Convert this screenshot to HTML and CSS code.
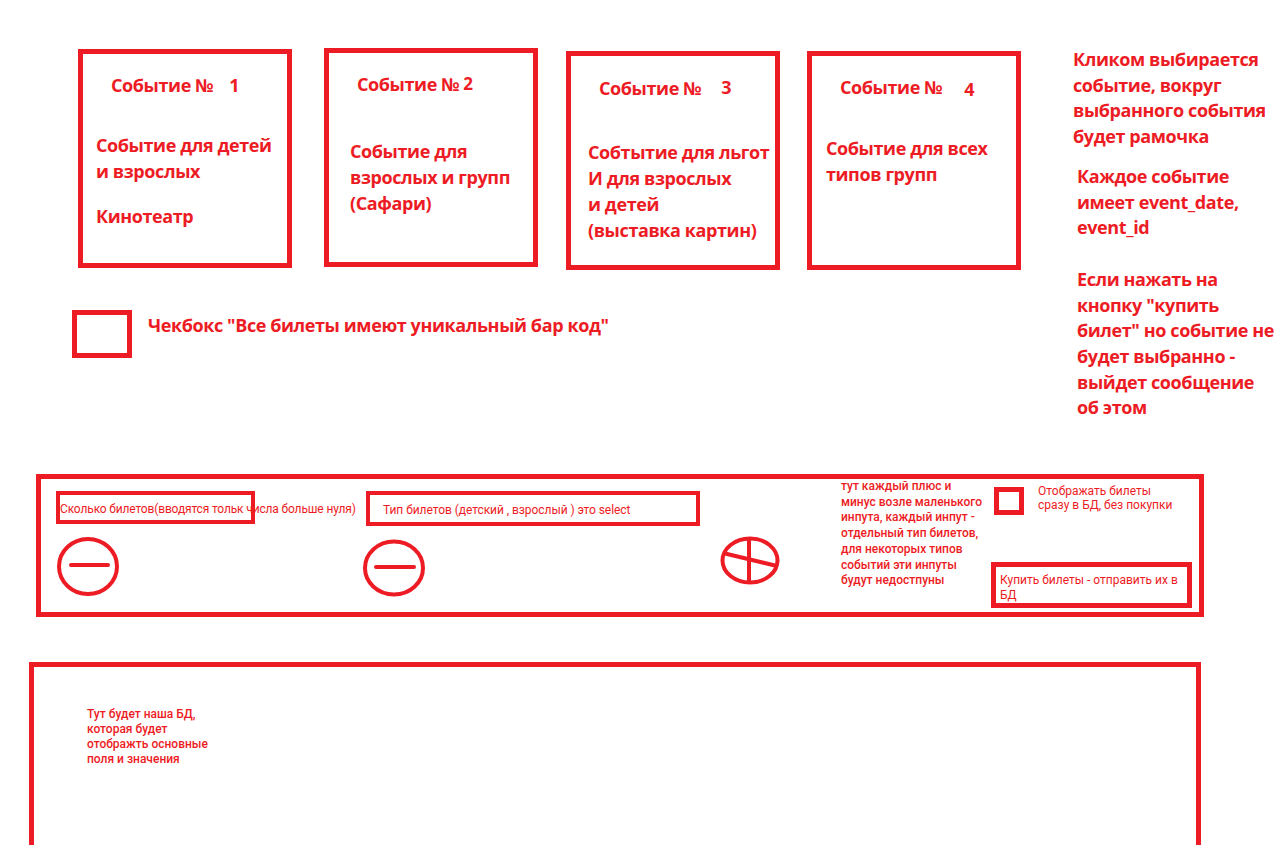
FILE: index.html
```html
<!DOCTYPE html>
<html lang="ru">
<head>
    <meta charset="UTF-8">
    <meta name="viewport" content="width=device-width, initial-scale=1.0">
    <title>Покупка билетов</title>
    <link rel="stylesheet" href="styles.css">
</head>
<body>
    <div class="top">
        <div class="left">
            <div class="events">
                <div class="event">
                    <div class="event-title">Событие №<span class="num">1</span></div>
                    <div class="event-text">Событие для детей<br>и взрослых</div>
                    <div class="event-text place">Кинотеатр</div>
                </div>
                <div class="event event-2">
                    <div class="event-title">Событие №<span class="num">2</span></div>
                    <div class="event-text">Событие для<br>взрослых и групп<br>(Сафари)</div>
                </div>
                <div class="event event-3">
                    <div class="event-title">Событие №<span class="num">3</span></div>
                    <div class="event-text">Собтытие для льгот<br>И для взрослых<br>и детей<br>(выставка картин)</div>
                </div>
                <div class="event event-4">
                    <div class="event-title">Событие №<span class="num">4</span></div>
                    <div class="event-text">Событие для всех<br>типов групп</div>
                </div>
            </div>
            <div class="barcode">
                <span class="check big"></span>
                <span>Чекбокс "Все билеты имеют уникальный бар код"</span>
            </div>
        </div>
        <div class="notes">
            <p>Кликом выбирается<br>событие, вокруг<br>выбранного события<br>будет рамочка</p>
            <p class="note-2">Каждое событие<br>имеет event_date,<br>event_id</p>
            <p class="note-3">Если нажать на<br>кнопку "купить<br>билет" но событие не<br>будет выбранно -<br>выйдет сообщение<br>об этом</p>
        </div>
    </div>

    <div class="tickets">
        <div class="col col-count">
            <div class="field field-count">Сколько билетов(вводятся тольк числа больше нуля)</div>
            <svg class="minus" width="64" height="61" viewBox="0 0 64 61">
                <ellipse cx="32" cy="30.5" rx="29" ry="27.5" fill="none" stroke="#ed1c24" stroke-width="4"/>
                <line x1="15" y1="29" x2="52" y2="29" stroke="#ed1c24" stroke-width="4" stroke-linecap="round"/>
            </svg>
        </div>
        <div class="col col-type">
            <div class="field field-type">Тип билетов (детский , взрослый ) это select</div>
            <svg class="minus" width="64" height="58" viewBox="0 0 64 58">
                <ellipse cx="32" cy="29" rx="29" ry="26.5" fill="none" stroke="#ed1c24" stroke-width="4"/>
                <line x1="14" y1="28" x2="52" y2="28" stroke="#ed1c24" stroke-width="4" stroke-linecap="round"/>
            </svg>
        </div>
        <div class="col col-plus">
            <svg width="60" height="49" viewBox="0 0 60 49">
                <ellipse cx="30" cy="24.5" rx="27.5" ry="22" fill="none" stroke="#ed1c24" stroke-width="4"/>
                <line x1="29" y1="3" x2="29" y2="46" stroke="#ed1c24" stroke-width="4"/>
                <line x1="3" y1="17" x2="57" y2="30" stroke="#ed1c24" stroke-width="4"/>
            </svg>
        </div>
        <div class="col col-hint">
            тут каждый плюс и<br>минус возле маленького<br>инпута, каждый инпут -<br>отдельный тип билетов,<br>для некоторых типов<br>событий эти инпуты<br>будут недостпуны
        </div>
        <div class="col col-actions">
            <div class="show-db">
                <span class="check small"></span>
                <span class="show-db-text">Отображать билеты<br>сразу в БД, без покупки</span>
            </div>
            <div class="buy">Купить билеты - отправить их в<br>БД</div>
        </div>
    </div>

    <div class="db">
        <p>Тут будет наша БД,<br>которая будет<br>отображть основные<br>поля и значения</p>
    </div>
</body>
</html>
```

FILE: styles.css
```css
html {
    overflow: hidden;
}
body {
    margin: 0;
    background-color: #fff;
    color: #ed1c24;
    font-family: "Open Sans", "Liberation Sans", sans-serif;
    font-weight: 700;
}
p {
    margin: 0;
}
.top {
    height: 474px;
    box-sizing: border-box;
    padding-top: 48px;
    display: flex;
}
.left {
    margin-left: 72px;
    width: 949px;
}
.events {
    display: flex;
    align-items: flex-start;
    margin-left: 6px;
}
.event {
    width: 214px;
    height: 219px;
    box-sizing: border-box;
    border: 5px solid #ed1c24;
    padding: 18px 0 0 13px;
    font-size: 18px;
    line-height: 26px;
    letter-spacing: -0.4px;
    white-space: nowrap;
    margin-right: 32px;
    margin-top: 1px;
}
.event-title {
    margin-left: 15px;
    margin-bottom: 34px;
}
.num {
    display: inline-block;
    margin-left: 16px;
}
.place {
    margin-top: 19px;
}
.event-2 {
    margin-top: 0;
    margin-right: 28px;
    padding-left: 21px;
}
.event-2 .event-title {
    margin-left: 7px;
    margin-bottom: 41px;
}
.event-2 .num {
    margin-left: 4px;
    font-size: 17px;
    vertical-align: 1px;
}
.event-3 {
    margin-top: 3px;
    margin-right: 27px;
    padding-left: 17px;
}
.event-3 .event-title {
    margin-left: 11px;
    margin-bottom: 38px;
}
.event-3 .num {
    margin-left: 20px;
    vertical-align: 1px;
}
.event-4 {
    margin-top: 3px;
    margin-right: 0;
    padding-left: 14px;
}
.event-4 .event-title {
    margin-left: 14px;
    margin-bottom: 33px;
}
.event-4 .num {
    margin-left: 22px;
    vertical-align: -2px;
}
.barcode {
    display: flex;
    align-items: flex-start;
    margin-top: 40px;
    font-size: 18px;
    line-height: 26px;
    letter-spacing: -0.4px;
    white-space: nowrap;
}
.barcode span + span {
    margin-left: 16px;
    margin-top: 2px;
}
.check {
    display: block;
    box-sizing: border-box;
    border: 5px solid #ed1c24;
    flex-shrink: 0;
}
.check.big {
    width: 60px;
    height: 48px;
}
.check.small {
    width: 30px;
    height: 28px;
}
.notes {
    margin-left: 52px;
    margin-top: -1px;
    font-size: 18px;
    line-height: 25.7px;
    letter-spacing: -0.4px;
    white-space: nowrap;
}
.note-2 {
    margin-top: 14px;
    margin-left: 4px;
}
.note-3 {
    margin-top: 26px;
    margin-left: 4px;
}

.tickets {
    margin-left: 36px;
    width: 1168px;
    height: 143px;
    box-sizing: border-box;
    border: 5px solid #ed1c24;
    display: flex;
    font-family: Roboto, "Liberation Sans", sans-serif;
    font-weight: 400;
    font-size: 12px;
}
.col {
    display: flex;
    flex-direction: column;
    align-items: flex-start;
}
.field {
    box-sizing: border-box;
    border: 4px solid #ed1c24;
    white-space: nowrap;
}
.field-count {
    margin-top: 12px;
    width: 199px;
    height: 33px;
    padding: 7px 0 0 0;
    letter-spacing: -0.15px;
}
.col-count {
    margin-left: 15px;
    width: 306px;
}
.col-count .minus {
    margin-top: 12px;
}
.col-type {
    width: 338px;
}
.field-type {
    margin-top: 12px;
    margin-left: 4px;
    width: 334px;
    height: 35px;
    padding: 8px 0 0 13px;
    letter-spacing: -0.05px;
}
.col-type .minus {
    margin-top: 13px;
}
.col-plus {
    margin-left: 20px;
    padding-top: 57px;
}
.col-hint {
    display: block;
    margin-left: 61px;
    width: 150px;
    font-weight: 500;
    line-height: 15.7px;
}
.col-actions {
    width: 201px;
    padding-bottom: 4px;
}
.show-db {
    display: flex;
    align-items: flex-start;
    margin-top: 8px;
    margin-left: 3px;
}
.show-db-text {
    margin-left: 14px;
    margin-top: -3px;
    line-height: 14px;
}
.buy {
    margin-top: auto;
    width: 201px;
    height: 46px;
    box-sizing: border-box;
    border: 5px solid #ed1c24;
    padding: 6px 4px 0;
    line-height: 15px;
}

.db {
    margin-top: 45px;
    margin-left: 29px;
    width: 1172px;
    height: 300px;
    box-sizing: border-box;
    border: 5px solid #ed1c24;
    padding: 40px 0 0 53px;
    font-family: Roboto, "Liberation Sans", sans-serif;
    font-weight: 500;
    font-size: 12px;
    line-height: 15px;
}
```
